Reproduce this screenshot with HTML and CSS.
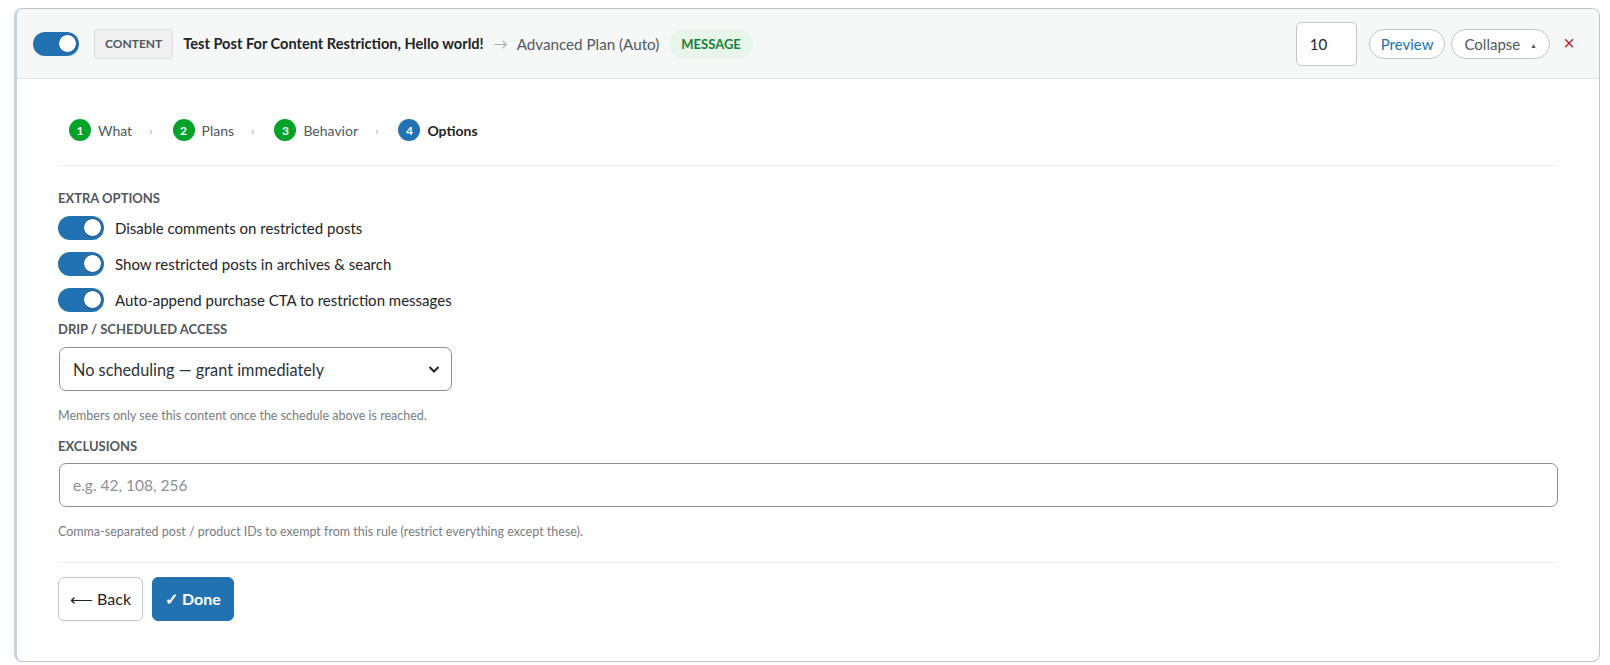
FILE: index.html
```html
<!DOCTYPE html>
<html lang="en">
<head>
    <meta charset="UTF-8">
    <title>Content Restriction Rule</title>
    <link rel="stylesheet" href="styles.css">
</head>
<body>
    <div class="rule-card">
        <div class="rule-head">
            <span class="toggle"><span class="knob"></span></span>
            <span class="type-badge">CONTENT</span>
            <span class="rule-title">Test Post For Content Restriction, Hello world!</span>
            <span class="rule-arrow">&rarr;</span>
            <span class="rule-plan">Advanced Plan (Auto)</span>
            <span class="msg-badge">MESSAGE</span>
            <span class="head-spacer"></span>
            <input class="priority" type="text" value="10">
            <button class="pill pill-preview">Preview</button>
            <button class="pill">Collapse <span class="caret">&#9650;</span></button>
            <button class="close-x">&times;</button>
        </div>
        <div class="rule-body">
            <div class="steps">
                <span class="step done"><span class="num">1</span>What</span>
                <span class="sep">&rsaquo;</span>
                <span class="step done"><span class="num">2</span>Plans</span>
                <span class="sep">&rsaquo;</span>
                <span class="step done"><span class="num">3</span>Behavior</span>
                <span class="sep">&rsaquo;</span>
                <span class="step current"><span class="num">4</span>Options</span>
            </div>

            <div class="field-label first">EXTRA OPTIONS</div>
            <div class="opt-row"><span class="toggle"><span class="knob"></span></span>Disable comments on restricted posts</div>
            <div class="opt-row"><span class="toggle"><span class="knob"></span></span>Show restricted posts in archives &amp; search</div>
            <div class="opt-row last"><span class="toggle"><span class="knob"></span></span>Auto-append purchase CTA to restriction messages</div>

            <div class="field-label drip">DRIP / SCHEDULED ACCESS</div>
            <div class="select">
                <span>No scheduling &mdash; grant immediately</span>
                <svg width="14" height="14" viewBox="0 0 14 14"><path d="M2.5 5 L7 9.5 L11.5 5" fill="none" stroke="#1d2327" stroke-width="2"/></svg>
            </div>
            <p class="help">Members only see this content once the schedule above is reached.</p>

            <div class="field-label excl">EXCLUSIONS</div>
            <input class="text-input" type="text" placeholder="e.g. 42, 108, 256">
            <p class="help">Comma-separated post / product IDs to exempt from this rule (restrict everything except these).</p>

            <div class="actions">
                <button class="btn">&#10229; Back</button>
                <button class="btn btn-primary">&#10003; Done</button>
            </div>
        </div>
    </div>
</body>
</html>
```

FILE: styles.css
```css
body { margin: 0; padding: 8px 10px 0 14px; background: #fff; font-family: Lato, "Liberation Sans", sans-serif; color: #1d2327; }
.rule-card { border: 1px solid #c3c4c7; border-left: 3px solid #c5d2e0; border-radius: 8px; background: #fff; overflow: hidden; }

.rule-head { display: flex; align-items: center; height: 69px; padding: 0 18px 0 16px; background: #f6f7f7; border-bottom: 1px solid #e2e4e7; }
.toggle { position: relative; display: inline-block; width: 46px; height: 24px; border-radius: 12px; background: #2271b1; flex: none; }
.toggle .knob { position: absolute; top: 2px; right: 2px; width: 17px; height: 17px; border-radius: 50%; background: #fff; border: 1.5px solid #1b5a8e; }
.type-badge { margin-left: 15px; padding: 0 10px; height: 28px; line-height: 28px; font-size: 12px; font-weight: 700; color: #50575e; background: #f0f0f1; border: 1px solid #dcdcde; border-radius: 4px; }
.rule-title { margin-left: 10px; font-size: 14.6px; font-weight: 700; color: #1d2327; }
.rule-arrow { margin: 0 9px 0 10px; color: #a7aaad; font-size: 14px; }
.rule-plan { font-size: 15.2px; color: #50575e; }
.msg-badge { margin-left: 10px; padding: 0 12px; height: 28px; line-height: 28px; border-radius: 14px; background: #e7f5ea; color: #1a7f37; font-size: 13px; font-weight: 700; }
.head-spacer { flex: 1; }
.priority { width: 61px; height: 44px; box-sizing: border-box; padding: 0 13px; border: 1px solid #c3c4c7; border-radius: 5px; font: 15px Lato, "Liberation Sans", sans-serif; color: #1d2327; background: #fff; margin-right: 12px; }
.pill { height: 30px; padding: 0 12px; border: 1px solid #c3c4c7; border-radius: 15px; background: #fff; font: 15px Lato, "Liberation Sans", sans-serif; color: #50575e; margin-right: 6px; cursor: pointer; }
.pill-preview { color: #2271b1; padding: 0 11px; }
.caret { font-size: 7px; margin-left: 6px; vertical-align: 2px; }
.close-x { width: 24px; margin-left: 1px; border: 0; background: none; color: #b32d2e; font-size: 20px; padding: 0; cursor: pointer; }

.rule-body { padding: 40px 41px 40px 41px; }
.steps { display: flex; align-items: center; padding: 0 0 24px 11px; border-bottom: 1px solid #eeeeee; font-size: 14px; }
.step { display: inline-flex; align-items: center; color: #50575e; }
.step .num { width: 22px; height: 22px; border-radius: 50%; background: #00a32a; color: #fff; font-size: 12px; font-weight: 700; display: inline-flex; align-items: center; justify-content: center; margin-right: 7px; }
.step.current { color: #1d2327; font-weight: 700; }
.step.current .num { background: #2271b1; }
.sep { color: #a7aaad; font-size: 12px; margin: 0 20px 0 17px; }

.field-label { font-size: 13px; font-weight: 700; color: #50575e; line-height: 16px; margin: 14px 0 9px; }
.field-label.first { margin-top: 24px; }
.field-label.drip { margin-top: 9px; margin-bottom: 10px; }
.opt-row { display: flex; align-items: center; height: 25px; font-size: 15px; color: #1d2327; margin-bottom: 11px; }
.opt-row.last { margin-bottom: 0; }
.opt-row .toggle { margin-right: 11px; }

.select { display: flex; align-items: center; justify-content: space-between; width: 393px; height: 44px; box-sizing: border-box; margin-left: 1px; padding: 0 10px 0 13px; border: 1px solid #8c8f94; border-radius: 7px; font-size: 16.3px; color: #2c3338; }
.help { margin: 17px 0 0; font-size: 12.5px; line-height: 16px; color: #787c82; }
.text-input { display: block; width: calc(100% - 1px); height: 44px; box-sizing: border-box; margin-left: 1px; padding: 0 13px; border: 1px solid #8c8f94; border-radius: 7px; font: 15.5px Lato, "Liberation Sans", sans-serif; }
.text-input::placeholder { color: #8c8f94; }

.actions { margin-top: 22px; padding-top: 14px; border-top: 1px solid #eeeeee; display: flex; gap: 9px; }
.btn { height: 44px; padding: 0 11px; border: 1px solid #c3c4c7; border-radius: 6px; background: #fff; font: 16px Lato, "Liberation Sans", sans-serif; color: #1d2327; cursor: pointer; }
.btn-primary { background: #2271b1; border-color: #2271b1; color: #fff; font-weight: 700; padding: 0 12px; }
```
